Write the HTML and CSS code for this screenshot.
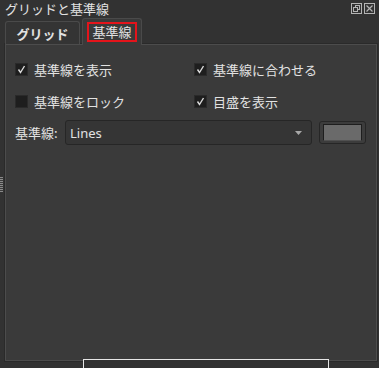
FILE: index.html
```html
<!DOCTYPE html>
<html lang="ja">
<head>
<meta charset="utf-8">
<link rel="stylesheet" href="styles.css">
</head>
<body>
<div class="window">
  <div class="titlebar">
    <span class="title">グリッドと基準線</span>
    <div class="title-icons">
      <svg class="ticon" width="11" height="11" viewBox="0 0 11 11">
        <rect x="0.5" y="0.5" width="10" height="10" fill="none" stroke="#b4b4b4"/>
        <rect x="4.5" y="2.5" width="4" height="4" fill="none" stroke="#b4b4b4"/>
        <rect x="2.5" y="4.5" width="4" height="4" fill="#323232" stroke="#b4b4b4"/>
      </svg>
      <svg class="ticon" width="11" height="11" viewBox="0 0 11 11">
        <rect x="0.5" y="0.5" width="10" height="10" fill="none" stroke="#b4b4b4"/>
        <path d="M2.5 2.5 L8.5 8.5 M8.5 2.5 L2.5 8.5" stroke="#b4b4b4" stroke-width="1.2"/>
      </svg>
    </div>
  </div>
  <div class="tabs">
    <div class="tab">グリッド</div>
    <div class="tab active"><span class="mark">基準線</span></div>
  </div>
  <div class="panel">
    <div class="checks">
      <label class="check">
        <span class="box"><svg width="11" height="11" viewBox="0 0 11 11"><path d="M2.5 5.5 L4.5 8.5 L8.5 2" fill="none" stroke="#dcdcdc" stroke-width="1.4"/></svg></span>
        <span>基準線を表示</span>
      </label>
      <label class="check">
        <span class="box"><svg width="11" height="11" viewBox="0 0 11 11"><path d="M2.5 5.5 L4.5 8.5 L8.5 2" fill="none" stroke="#dcdcdc" stroke-width="1.4"/></svg></span>
        <span>基準線に合わせる</span>
      </label>
      <label class="check">
        <span class="box"></span>
        <span>基準線をロック</span>
      </label>
      <label class="check">
        <span class="box"><svg width="11" height="11" viewBox="0 0 11 11"><path d="M2.5 5.5 L4.5 8.5 L8.5 2" fill="none" stroke="#dcdcdc" stroke-width="1.4"/></svg></span>
        <span>目盛を表示</span>
      </label>
    </div>
    <div class="guide-row">
      <span class="label">基準線:</span>
      <div class="combo">
        <span>Lines</span>
        <svg width="7" height="4" viewBox="0 0 7 4"><path d="M0 0 L7 0 L3.5 4 Z" fill="#a8a8a8"/></svg>
      </div>
      <div class="color-btn"><div class="swatch"></div></div>
    </div>
  </div>
  <div class="grip"></div>
  <div class="overlay-box"></div>
</div>
</body>
</html>
```
FILE: styles.css
```css
html, body {
  margin: 0;
  padding: 0;
}
body {
  width: 379px;
  height: 368px;
  overflow: hidden;
  background: #323232;
  color: #e2e2e2;
  font-family: "Noto Sans CJK JP", "Noto Sans", sans-serif;
  font-size: 13px;
}
.window {
  position: relative;
  width: 379px;
  height: 368px;
}
.titlebar {
  height: 17px;
  display: flex;
  align-items: center;
  justify-content: space-between;
  padding: 0 4px 0 5px;
}
.title {
  line-height: 17px;
}
.title-icons {
  display: flex;
  gap: 2px;
  margin-bottom: 1px;
}
.ticon {
  display: block;
}
.tabs {
  display: flex;
  align-items: flex-end;
  padding-left: 5px;
  height: 27px;
  position: relative;
  z-index: 1;
}
.tab {
  box-sizing: border-box;
  width: 75px;
  height: 23px;
  border: 1px solid #4a4a4a;
  border-bottom: none;
  border-radius: 3px 3px 0 0;
  background: #343434;
  display: flex;
  align-items: center;
  justify-content: center;
  font-weight: bold;
}
.tab.active {
  width: 60px;
  height: 27px;
  margin-left: 2px;
  background: #3a3a3a;
  font-weight: normal;
  margin-bottom: -1px;
  align-items: flex-start;
  padding-top: 3px;
}
.mark {
  display: block;
  border: 2px solid #e4141b;
  padding: 0 3px;
  line-height: 16px;
  font-size: 13px;
}
.panel {
  box-sizing: border-box;
  margin-left: 5px;
  width: 372px;
  height: 317px;
  border: 1px solid #4c4c4c;
  box-shadow: 0 0 0 1px #2a2a2a;
  background: #3a3a3a;
  padding: 8px 0 0 9px;
}
.checks {
  display: grid;
  grid-template-columns: 179px 1fr;
  grid-auto-rows: 32px;
}
.check {
  display: flex;
  align-items: center;
  gap: 6px;
}
.box {
  box-sizing: border-box;
  width: 13px;
  height: 13px;
  background: #1e1e1e;
  border: 1px solid #2a2a2a;
  display: flex;
  align-items: center;
  justify-content: center;
}
.box svg {
  display: block;
}
.guide-row {
  display: flex;
  align-items: center;
  margin-top: 3px;
  height: 25px;
}
.label {
  width: 50px;
}
.combo {
  box-sizing: border-box;
  width: 247px;
  height: 25px;
  border: 1px solid #262626;
  border-radius: 3px;
  background: #353535;
  display: flex;
  align-items: center;
  justify-content: space-between;
  padding: 0 9px 0 4px;
  font-family: "Noto Sans", sans-serif;
}
.combo svg {
  display: block;
}
.color-btn {
  box-sizing: border-box;
  margin-left: 7px;
  width: 47px;
  height: 23px;
  border: 1px solid #262626;
  border-radius: 3px;
  background: #3c3c3c;
  padding: 2px 3px;
}
.swatch {
  box-sizing: border-box;
  width: 100%;
  height: 100%;
  background: #6a6a6a;
  border: 1px solid #1e1e1e;
  border-bottom-color: #505050;
}
.grip {
  position: absolute;
  left: 0;
  top: 177px;
  width: 3px;
  height: 15px;
  background: repeating-linear-gradient(to bottom, #8a8a8a 0 1px, #3c3c3c 1px 2px);
}
.overlay-box {
  position: absolute;
  left: 83px;
  top: 359px;
  width: 244px;
  height: 20px;
  border: 1px solid #e6e6e6;
  background: #313131;
}
```
